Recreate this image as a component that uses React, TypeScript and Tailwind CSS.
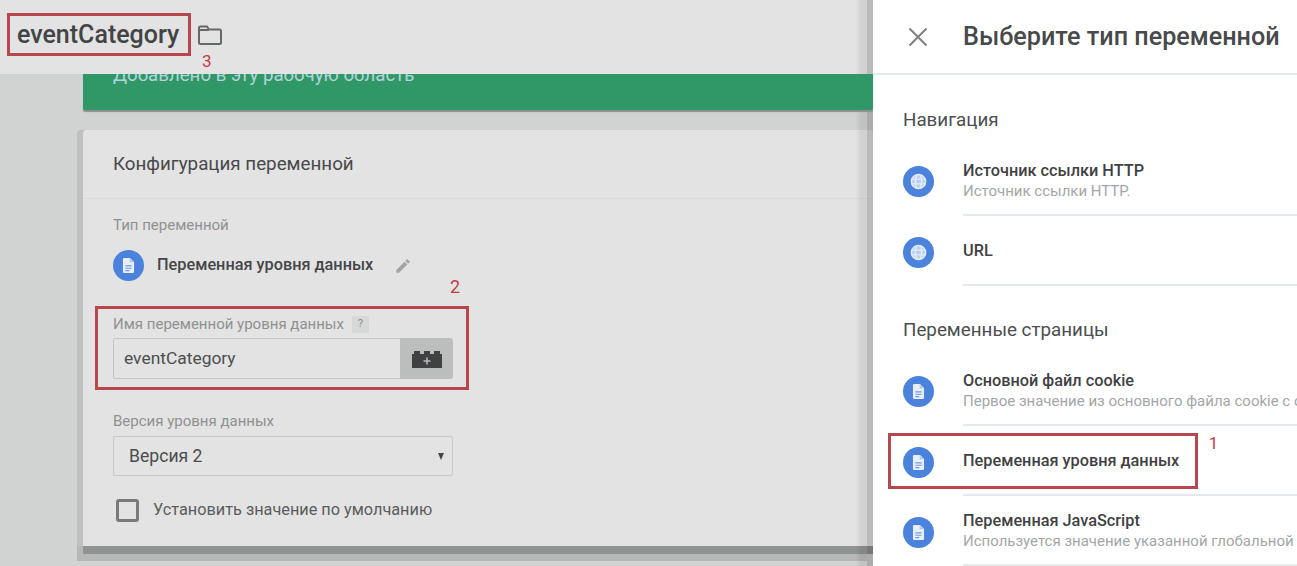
import React from 'react';

const font = "font-['Roboto',sans-serif]";

function GlobeBadge() {
  return (
    <div className="w-[31px] h-[31px] rounded-full bg-[#4a82dc] flex items-center justify-center shrink-0">
      <svg width="19" height="19" viewBox="0 0 24 24" fill="none" stroke="#e4ecf8" strokeWidth="1.8">
        <circle cx="12" cy="12" r="9" fill="#b9cff0" />
        <ellipse cx="12" cy="12" rx="4" ry="9" />
        <path d="M3 9h18M3 15h18" />
      </svg>
    </div>
  );
}

function DocBadge() {
  return (
    <div className="w-[31px] h-[31px] rounded-full bg-[#4a82dc] flex items-center justify-center shrink-0">
      <svg width="19" height="19" viewBox="0 0 24 24">
        <path d="M6.5 2.5h7.5l5 5v12.5a1.5 1.5 0 0 1-1.5 1.5h-11a1.5 1.5 0 0 1-1.5-1.5v-16a1.5 1.5 0 0 1 1.5-1.5z" fill="#e8effa" />
        <path d="M13.5 3v5h5" fill="#a9c4ee" />
        <path d="M8 12.5h8M8 15.5h8M8 18.500h5" stroke="#6f9be2" strokeWidth="1.500" />
      </svg>
    </div>
  );
}

function Row({ icon, title, desc, h, mark }: { icon: React.ReactNode; title: string; desc?: string; h: string; mark?: boolean }) {
  return (
    <div className={`flex items-center ${h}`}>
      <div className="w-[61px] pl-[30px] pt-[2px] shrink-0">{icon}</div>
      <div className="flex-1 min-w-0 h-full flex flex-col justify-center border-b-2 border-[#e6e9ec] ml-[29px] pt-[2px] relative">
        <div className="text-[16.3px] leading-[20px] font-medium text-[#3f4143] whitespace-nowrap">{title}</div>
        {desc && <div className="text-[15px] leading-[20px] text-[#a4a6a8] whitespace-nowrap overflow-hidden">{desc}</div>}
        {mark && (
          <>
            <div className="absolute left-[-75px] top-[7px] w-[310px] h-[56px] border-[3px] border-[#b8464f]" />
            <div className="absolute left-[246px] top-[6px] text-[16px] text-[#c23a44]">1</div>
          </>
        )}
      </div>
    </div>
  );
}

export default function App() {
  return (
    <div className={`${font} w-[1297px] h-[566px] overflow-hidden flex bg-[#d1d3d2]`}>
      {/* left side */}
      <div className="flex-1 min-w-0 flex flex-col">
        <div className="h-[74px] shrink-0 bg-[#e3e3e3] flex items-center pl-[17px] gap-[17px]">
          <div className="relative mb-[5px]">
            <span className="text-[25px] leading-[30px] font-medium text-[#424445]">eventCategory</span>
            <div className="absolute left-[-10px] top-[-7px] w-[184px] h-[43px] border-[3px] border-[#b8464f]" />
          </div>
          <svg width="26" height="22" viewBox="0 0 26 22" fill="none" stroke="#656869" strokeWidth="2" className="ml-[1px] mb-[5px]">
            <path d="M2 4V18.500a1.500 1.500 0 0 0 1.500 1.500h19a1.500 1.500 0 0 0 1.500-1.500V7a1.500 1.500 0 0 0-1.500-1.500H12L10 2.500H3.500A1.500 1.500 0 0 0 2 4z" />
            <path d="M2 6h10" />
          </svg>
          <div className="absolute left-[202px] top-[51px] text-[17px] leading-[20px] text-[#c23a44]">3</div>
        </div>

        <div className="flex-1 pl-[83px] flex flex-col">
          <div className="relative z-30 h-[36px] bg-[#2f9866] overflow-hidden rounded-b-[2px] shadow-[0_2px_1px_#8d8f8e] pl-[30px]">
            <div className="-mt-[10px] text-[18.7px] leading-[22px] text-[#b4d3dd]">Добавлено в эту рабочую область</div>
          </div>

          <div className="mt-[20px] h-[416px] bg-[#e3e3e3] rounded-t-[4px] shadow-[-6px_0_0_#bfc1c0,0_8px_0_#8f9392,-6px_15px_0_#b5b8b7] flex flex-col">
            <div className="h-[69px] shrink-0 flex items-center pl-[30px] border-b border-[#dadada] text-[18.8px] text-[#47494a]">
              Конфигурация переменной
            </div>

            <div className="pl-[30px] pt-[16px] text-[15px] leading-[20px] text-[#8f9191]">Тип переменной</div>
            <div className="mt-[15px] pl-[30px] flex items-center h-[31px] relative">
              <DocBadge />
              <span className="ml-[13px] text-[16.3px] font-medium text-[#444647]">Переменная уровня данных</span>
              <svg width="18" height="18" viewBox="0 0 24 24" fill="#a3a5a5" className="ml-[21px]">
                <path d="M3 17.250V21h3.750L17.810 9.940l-3.750-3.750L3 17.250zM20.710 7.040a1 1 0 0 0 0-1.410l-2.340-2.340a1 1 0 0 0-1.410 0l-1.830 1.830 3.750 3.750 1.830-1.830z" />
              </svg>
            </div>

            <div className="relative mt-[33px] ml-[30px] w-[340px]">
              <div className="absolute left-[-18px] top-[-8px] w-[374px] h-[84px] border-[3px] border-[#b8464f]" />
              <div className="absolute left-[337px] top-[-38px] text-[18px] leading-[22px] text-[#c23a44]">2</div>
              <div className="flex items-center gap-[8px] text-[15px] leading-[20px] text-[#8f9191] h-[20px]">
                Имя переменной уровня данных
                <span className="w-[17px] h-[17px] bg-[#d6d7d7] text-[11px] text-[#8a8c8c] flex items-center justify-center rounded-[2px]">?</span>
              </div>
              <div className="mt-[4px] h-[41px] flex">
                <div className="flex-1 border border-[#c4c5c5] border-r-0 rounded-l-[2px] pl-[10px] flex items-center text-[17.400px] text-[#4c4e4f]">eventCategory</div>
                <div className="w-[53px] bg-[#bcbebd] rounded-r-[3px] flex items-center justify-center">
                  <svg width="30" height="18" viewBox="0 0 30 18">
                    <path d="M0 4h2V1h6v3h4V1h6v3h4V1h6v3h2v14H0z" fill="#3f4142" />
                    <path d="M15 7.500v7M11.500 11h7" stroke="#b9bbba" strokeWidth="1.500" />
                  </svg>
                </div>
              </div>
            </div>

            <div className="ml-[30px] w-[340px] mt-[32px] text-[15px] leading-[20px] text-[#8f9191]">Версия уровня данных</div>
            <div className="ml-[30px] w-[340px] mt-[5px] h-[40px] border border-[#c9caca] rounded-[2px] flex items-center justify-between pl-[15px] pr-[8px] text-[17.600px] text-[#4a4c4d]">
              Версия 2
              <span className="w-0 h-0 border-l-[3.500px] border-r-[3.500px] border-t-[7px] border-l-transparent border-r-transparent border-t-[#444647]" />
            </div>

            <div className="ml-[33px] mt-[22px] flex items-center">
              <div className="w-[23px] h-[23px] border-[3px] border-[#797b7b] rounded-[3px]" />
              <span className="ml-[14px] text-[16.300px] text-[#5a5c5c]">Установить значение по умолчанию</span>
            </div>
          </div>
        </div>
      </div>

      {/* right panel */}
      <div className="relative z-20 w-[424px] shrink-0 bg-white flex flex-col">
        <div className="absolute top-0 bottom-0 left-[-18px] w-[18px] bg-[linear-gradient(to_right,rgba(0,0,0,0),rgba(0,0,0,0.08)_35%,rgba(0,0,0,0.08)_65%,rgba(0,0,0,0.18)_67%,rgba(0,0,0,0.18))]" />
        <div className="h-[75px] shrink-0 border-b-2 border-[#e6e9ec] flex items-center">
          <svg width="20" height="20" viewBox="0 0 20 20" stroke="#7d8080" strokeWidth="2" className="ml-[35px]">
            <path d="M1.500 1.500l17 17M18.500 1.500l-17 17" />
          </svg>
          <span className="ml-[35px] text-[25.200px] font-medium text-[#47494a] whitespace-nowrap">Выберите тип переменной</span>
        </div>

        <div className="pl-[30px] mt-[33px] h-[24px] text-[18.800px] leading-[24px] text-[#4c4e4f]">Навигация</div>
        <div className="mt-[13px]">
          <Row icon={<GlobeBadge />} title="Источник ссылки HTTP" desc="Источник ссылки HTTP." h="h-[71px]" />
          <Row icon={<GlobeBadge />} title="URL" h="h-[70px]" />
        </div>

        <div className="pl-[30px] mt-[32px] h-[24px] text-[18.800px] leading-[24px] text-[#4c4e4f]">Переменные страницы</div>
        <div className="mt-[13px]">
          <Row icon={<DocBadge />} title="Основной файл cookie" desc="Первое значение из основного файла cookie с определённым именем" h="h-[71px]" />
          <Row icon={<DocBadge />} title="Переменная уровня данных" h="h-[70px]" mark />
          <Row icon={<DocBadge />} title="Переменная JavaScript" desc="Используется значение указанной глобальной переменной JavaScript" h="h-[70px]" />
        </div>
      </div>
    </div>
  );
}
